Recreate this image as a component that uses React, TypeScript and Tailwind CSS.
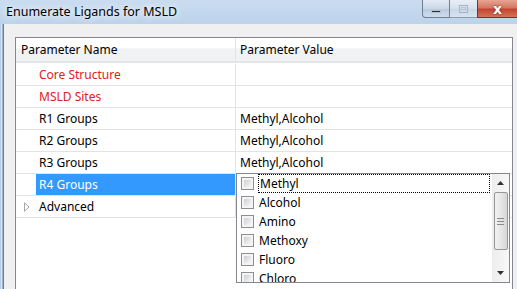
import React from "react";

const font = "font-['Segoe_UI','Noto_Sans','Open_Sans',sans-serif]";

function Checkbox() {
  return (
    <div className="w-[13px] h-[13px] border border-[#8e8f8f] bg-[#f4f4f4] p-[2px] shrink-0">
      <div className="w-full h-full bg-[linear-gradient(135deg,#cdd0d4,#f7f7f7)]" />
    </div>
  );
}

function Row({
  name,
  value,
  red,
  selected,
  expander,
}: {
  name: string;
  value?: string;
  red?: boolean;
  selected?: boolean;
  expander?: boolean;
}) {
  return (
    <div className="flex h-[22px] border-b border-[#e3e3e3]">
      <div className="w-[220px] flex border-r border-[#e3e3e3]">
        <div className="w-[20px] flex items-center justify-center">
          {expander && (
            <svg width="6" height="10" viewBox="0 0 6 10" className="ml-[2px]">
              <path d="M0.5 0.8 L5 5 L0.5 9.2 Z" fill="none" stroke="#a6a6a6" strokeWidth="1" />
            </svg>
          )}
        </div>
        <div
          className={`flex-1 flex items-center pl-[3px] ${
            selected ? "bg-[#3399ff] text-white" : red ? "text-[#e0201c]" : "text-black"
          }`}
        >
          {name}
        </div>
      </div>
      <div className="flex-1 flex items-center pl-[4px] text-black">{value}</div>
    </div>
  );
}

export default function App() {
  const items = ["Methyl", "Alcohol", "Amino", "Methoxy", "Fluoro", "Chloro"];
  return (
    <div className={`w-[517px] h-[289px] overflow-hidden flex flex-col ${font} text-[12px] leading-none`}>
      {/* Title bar */}
      <div className="h-[24px] flex shrink-0 bg-[linear-gradient(#cadcf0,#bcd3eb)] relative">
        <div className="pl-[6px] pt-[6px] text-[12.5px] text-black [text-shadow:0_0_6px_#ffffff,0_0_10px_#ffffff]">
          Enumerate Ligands for MSLD
        </div>
        <div className="ml-auto flex h-[18px]">
          <div className="w-[28px] h-full border border-[#6f7f92] border-t-0 rounded-bl-[4px] bg-[linear-gradient(#e4ecf5,#c9d7e7_50%,#b8c9dd_51%,#cfdcec)] flex items-end justify-center pb-[4px]">
            <div className="w-[10px] h-[3px] bg-[#1d2f46] border border-[#ffffff]/70" />
          </div>
          <div className="w-[27px] h-full border-b border-[#8a9bb0] bg-[linear-gradient(#e9eff6,#d5e0ec_50%,#c8d6e6_51%,#d8e3ef)] flex items-center justify-center">
            <div className="w-[9px] h-[8px] border border-[#a7b3c2] flex items-center justify-center">
              <div className="w-[5px] h-[3px] border border-[#b6c1cf]" />
            </div>
          </div>
          <div className="w-[40px] h-full border border-[#7c3030] border-t-0 border-r-0 bg-[linear-gradient(#e8a493,#d47461_48%,#c2432c_52%,#d5735a)] flex items-center justify-center">
            <span className="text-white font-bold text-[14px] leading-none font-['DejaVu_Sans',sans-serif] [text-shadow:0_0_2px_#5a1a10]">
              x
            </span>
          </div>
        </div>
      </div>

      {/* Client */}
      <div className="flex-1 flex">
        <div className="w-[4px] bg-[linear-gradient(90deg,#a9c3e0,#d6e4f3,#7f9cbd)] border-r border-[#5f7fa3]" />
        <div className="flex-1 bg-[#f0f0f0] flex flex-col pt-[13px] pl-[11px] pr-[4px]">
          <div className="flex-1 border border-b-0 border-[#828790] bg-white flex flex-col relative">
            {/* Header */}
            <div className="h-[25px] flex border-b-2 border-b-[#e5e5e5] bg-[linear-gradient(#ffffff_0%,#ffffff_45%,#f1f2f4_46%,#f1f2f4_100%)]">
              <div className="w-[220px] border-r border-[#e3e3e3] flex items-center pl-[5px] text-black">
                Parameter Name
              </div>
              <div className="flex-1 flex items-center pl-[4px] text-black">Parameter Value</div>
            </div>
            <div className="h-px" />
            <Row name="Core Structure" red />
            <Row name="MSLD Sites" red />
            <Row name="R1 Groups" value="Methyl,Alcohol" />
            <Row name="R2 Groups" value="Methyl,Alcohol" />
            <Row name="R3 Groups" value="Methyl,Alcohol" />
            <Row name="R4 Groups" selected />
            <Row name="Advanced" expander />

            {/* Dropdown list */}
            <div className="absolute left-[220px] top-[135px] w-[274px] h-[110px] border border-[#828790] bg-white flex overflow-hidden">
              <div className="flex-1 flex flex-col">
                {items.map((it, i) => (
                  <div key={it} className="h-[19px] shrink-0 flex items-center pl-[4px]">
                    <Checkbox />
                    <div
                      className={`ml-[4px] h-[19px] flex items-center pl-px ${
                        i === 0 ? "flex-1 border border-dotted border-black mr-[2px]" : ""
                      }`}
                    >
                      {it}
                    </div>
                  </div>
                ))}
              </div>
              {/* Scrollbar */}
              <div className="w-[17px] bg-[linear-gradient(90deg,#ededed,#f8f8f8)] flex flex-col items-center">
                <div className="h-[18px] flex items-center justify-center">
                  <svg width="7" height="4" viewBox="0 0 7 4">
                    <path d="M0 4 L3.5 0 L7 4 Z" fill="#303030" />
                  </svg>
                </div>
                <div className="w-[14px] h-[58px] rounded-[2px] border border-[#979797] bg-[linear-gradient(90deg,#f2f2f2,#e6e6e6_50%,#d6d6d6)] flex flex-col items-center justify-center gap-[2px]">
                  <div className="w-[7px] h-px bg-[#8a8a8a]" />
                  <div className="w-[7px] h-px bg-[#8a8a8a]" />
                  <div className="w-[7px] h-px bg-[#8a8a8a]" />
                </div>
                <div className="flex-1" />
                <div className="h-[18px] flex items-center justify-center">
                  <svg width="7" height="4" viewBox="0 0 7 4">
                    <path d="M0 0 L3.5 4 L7 0 Z" fill="#303030" />
                  </svg>
                </div>
              </div>
            </div>
          </div>
        </div>
      </div>
    </div>
  );
}
